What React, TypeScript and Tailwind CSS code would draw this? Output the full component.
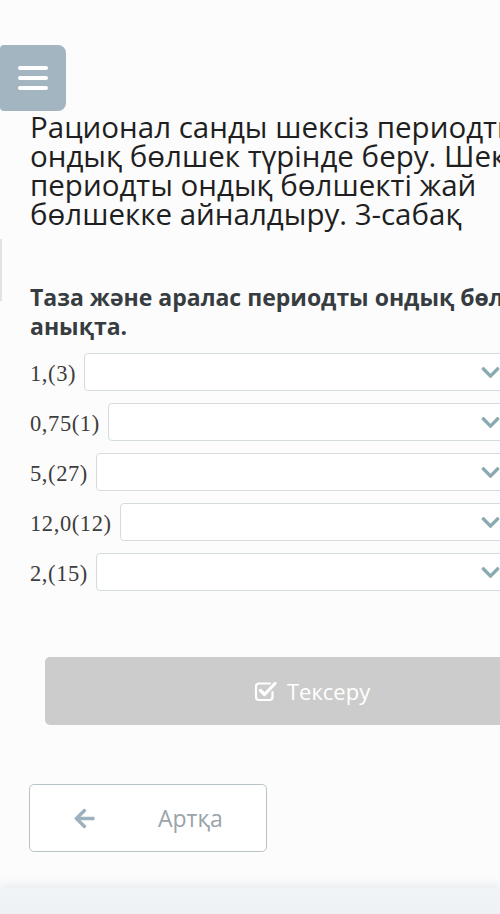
import { FaChevronDown, FaArrowLeft } from "react-icons/fa";

const rows = ["1,(3)", "0,75(1)", "5,(27)", "12,0(12)", "2,(15)"];

function CheckSquare() {
  return (
    <svg width="23" height="22" viewBox="0 0 23 22" fill="none" stroke="white" strokeLinecap="round" strokeLinejoin="round">
      <path d="M16 3.5H5a3 3 0 0 0-3 3V17a3 3 0 0 0 3 3h10.5a3 3 0 0 0 3-3v-5" strokeWidth="2.2" />
      <path d="M6.5 10.5l4 4L21 3.5" strokeWidth="3.2" />
    </svg>
  );
}

export default function App() {
  return (
    <div className="relative w-[500px] h-[914px] overflow-hidden bg-[#fcfcfc] font-['Open_Sans',sans-serif]">
      <div className="w-[560px] pt-[45px]">
        {/* menu button */}
        <button className="flex flex-col justify-center items-center gap-[6px] w-[66px] h-[66px] rounded-r-[8px] rounded-l-[4px] bg-[#a3b5c1]">
          <span className="block w-[30px] h-[4px] rounded bg-white" />
          <span className="block w-[30px] h-[4px] rounded bg-white" />
          <span className="block w-[30px] h-[4px] rounded bg-white" />
        </button>

        <h1 className="mt-[1px] pl-[30px] text-[29.5px] leading-[29px] text-[#1f1f1f] whitespace-nowrap">
          Рационал санды шексіз периодты
          <br />
          ондық бөлшек түрінде беру. Шексіз
          <br />
          периодты ондық бөлшекті жай
          <br />
          бөлшекке айналдыру. 3-сабақ
        </h1>

        <div className="relative mt-[55px] pl-[30px] pr-[40px]">
          <div className="absolute left-0 top-[-44px] w-[2px] h-[62px] bg-[#dfe4e6]" />
          <p className="text-[23px] leading-[29px] font-bold text-[#373c41] whitespace-nowrap">
            Таза және аралас периодты ондық бөлшекті
            <br />
            анықта.
          </p>

          <div className="mt-[12px] flex flex-col gap-[12px]">
            {rows.map((r) => (
              <div key={r} className="flex items-center gap-[8px]">
                <span className="pt-[4px] font-['Liberation_Serif',serif] text-[22.5px] tracking-[0.6px] text-[#3e3e3e] whitespace-nowrap leading-none">
                  {r}
                </span>
                <div className="flex-1 h-[38px] rounded-[4px] border border-[#d5dcdf] bg-white flex items-center justify-end pr-[18px]">
                  <FaChevronDown className="text-[#8aaab2] text-[21px]" />
                </div>
              </div>
            ))}
          </div>

          <button className="mt-[66px] ml-[15px] w-[540px] h-[68px] rounded-[5px] bg-[#cccccc] flex items-center justify-start pl-[209px] gap-[10px] text-white text-[22px]">
            <CheckSquare />
            <span>Тексеру</span>
          </button>

          <button className="mt-[59px] -ml-[1px] w-[238px] h-[68px] rounded-[5px] border border-[#b9c2c7] bg-white flex items-center pl-[43px] text-[23px] text-[#9aa4aa]">
            <FaArrowLeft className="text-[#9db0bd] text-[23px]" />
            <span className="ml-[62px]">Артқа</span>
          </button>
        </div>
      </div>

      <div className="absolute left-0 right-0 bottom-0 h-[26px] bg-gradient-to-b from-[#f1f4f6] to-[#eef2f5] shadow-[0_-4px_8px_rgba(200,210,220,0.35)]" />
    </div>
  );
}
